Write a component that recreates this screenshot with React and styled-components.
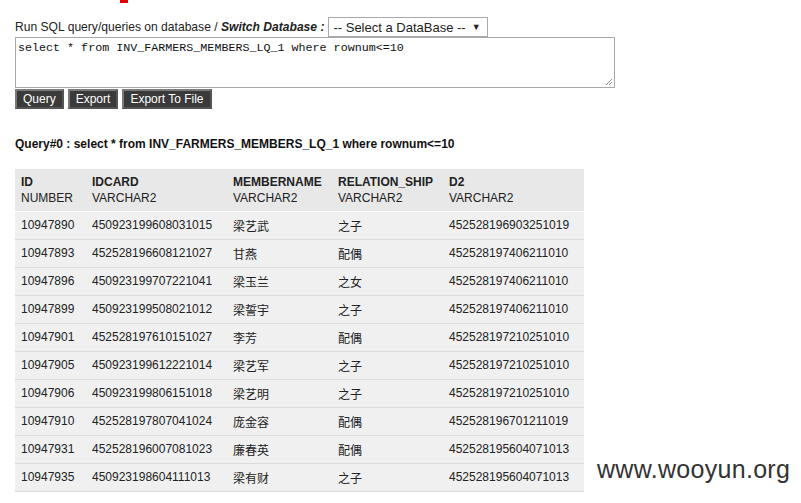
import React from 'react';
import styled, { createGlobalStyle } from 'styled-components';

const GlobalStyle = createGlobalStyle`
  body {
    margin: 0;
    background: #fff;
    font-family: Arial, "Liberation Sans", "Noto Sans CJK SC", sans-serif;
    color: #222;
  }
`;

const Page = styled.div`
  position: relative;
  width: 801px;
  height: 503px;
  overflow: hidden;
  padding: 17px 15px 0;
  box-sizing: border-box;
`;

const RedMark = styled.div`
  position: absolute;
  left: 120px;
  top: 0;
  width: 8px;
  height: 3px;
  background: #e00000;
`;

const Toolbar = styled.div`
  display: flex;
  align-items: center;
  height: 20px;
  color: #222;
`;

const Label = styled.span`
  margin-right: 4px;
  font-size: 12.1px;
  b {
    font-style: italic;
  }
`;

const Select = styled.div`
  display: flex;
  align-items: center;
  gap: 6px;
  height: 20px;
  box-sizing: border-box;
  border: 1px solid #a9a9a9;
  padding: 0 6px 0 4px;
  font-size: 13px;
  background: #fff;
  span {
    font-size: 9px;
  }
`;

const Editor = styled.div`
  position: relative;
  width: 600px;
  height: 51px;
  box-sizing: border-box;
  border: 1px solid #a9a9a9;
  padding: 3px 2px;
  font-family: "Liberation Mono", "Courier New", monospace;
  font-size: 11.7px;
  color: #111;
`;

const Grip = styled.svg`
  position: absolute;
  right: 1px;
  bottom: 1px;
`;

const Buttons = styled.div`
  display: flex;
  gap: 4px;
  margin-top: 1px;
`;

const Button = styled.div`
  height: 20px;
  box-sizing: border-box;
  padding: 0 6px;
  display: flex;
  align-items: center;
  background: #3a3a3a;
  border: 2px solid #7a7a7a;
  border-right-color: #555;
  border-bottom-color: #555;
  color: #fff;
  font-size: 12px;
`;

const Heading = styled.div`
  margin-top: 28px;
  font-size: 12px;
  font-weight: bold;
  color: #111;
`;

const Table = styled.table`
  margin-top: 18px;
  border-collapse: collapse;
  font-size: 12px;
  color: #222;
  td, th {
    text-align: left;
    padding: 0 5px 0 6px;
    vertical-align: middle;
  }
`;

const HeadRow = styled.tr`
  background: #e8e8e8;
  height: 42px;
  border-bottom: 1px solid #fff;
  th {
    font-weight: normal;
    line-height: 16px;
  }
  b {
    font-weight: bold;
  }
`;

const Row = styled.tr`
  background: #f0f0f0;
  height: 28px;
  border-bottom: 1px solid #dadada;
`;

const Watermark = styled.div`
  position: absolute;
  left: 597px;
  top: 455px;
  font-size: 25px;
  color: #333;
  letter-spacing: 0.3px;
`;

const columns = [
  ['ID', 'NUMBER', 71],
  ['IDCARD', 'VARCHAR2', 141],
  ['MEMBERNAME', 'VARCHAR2', 105],
  ['RELATION_SHIP', 'VARCHAR2', 111],
  ['D2', 'VARCHAR2', 141],
];

const rows = [
  ['10947890', '450923199608031015', '梁艺武', '之子', '452528196903251019'],
  ['10947893', '452528196608121027', '甘燕', '配偶', '452528197406211010'],
  ['10947896', '450923199707221041', '梁玉兰', '之女', '452528197406211010'],
  ['10947899', '450923199508021012', '梁誓宇', '之子', '452528197406211010'],
  ['10947901', '452528197610151027', '李芳', '配偶', '452528197210251010'],
  ['10947905', '450923199612221014', '梁艺军', '之子', '452528197210251010'],
  ['10947906', '450923199806151018', '梁艺明', '之子', '452528197210251010'],
  ['10947910', '452528197807041024', '庞金容', '配偶', '452528196701211019'],
  ['10947931', '452528196007081023', '廉春英', '配偶', '452528195604071013'],
  ['10947935', '450923198604111013', '梁有财', '之子', '452528195604071013'],
];

const App = () => (
  <Page>
    <GlobalStyle />
    <RedMark />
    <Toolbar>
      <Label>
        Run SQL query/queries on database / <b>Switch Database :</b>
      </Label>
      <Select>
        -- Select a DataBase -- <span>▼</span>
      </Select>
    </Toolbar>
    <Editor>
      select * from INV_FARMERS_MEMBERS_LQ_1 where rownum&lt;=10
      <Grip width='8' height='8' viewBox='0 0 8 8'>
        <path d='M7 1 L1 7 M7 4 L4 7' stroke='#888' strokeWidth='1' />
      </Grip>
    </Editor>
    <Buttons>
      <Button>Query</Button>
      <Button>Export</Button>
      <Button>Export To File</Button>
    </Buttons>
    <Heading>Query#0 : select * from INV_FARMERS_MEMBERS_LQ_1 where rownum&lt;=10</Heading>
    <Table>
      <thead>
        <HeadRow>
          {columns.map(([name, type, w]) => (
            <th key={name} style={{ width: w - 11 }}>
              <b>{name}</b>
              <br />
              {type}
            </th>
          ))}
        </HeadRow>
      </thead>
      <tbody>
        {rows.map((r) => (
          <Row key={r[0]}>
            {r.map((c, i) => (
              <td key={i}>{c}</td>
            ))}
          </Row>
        ))}
      </tbody>
    </Table>
    <Watermark>www.wooyun.org</Watermark>
  </Page>
);

export default App;
